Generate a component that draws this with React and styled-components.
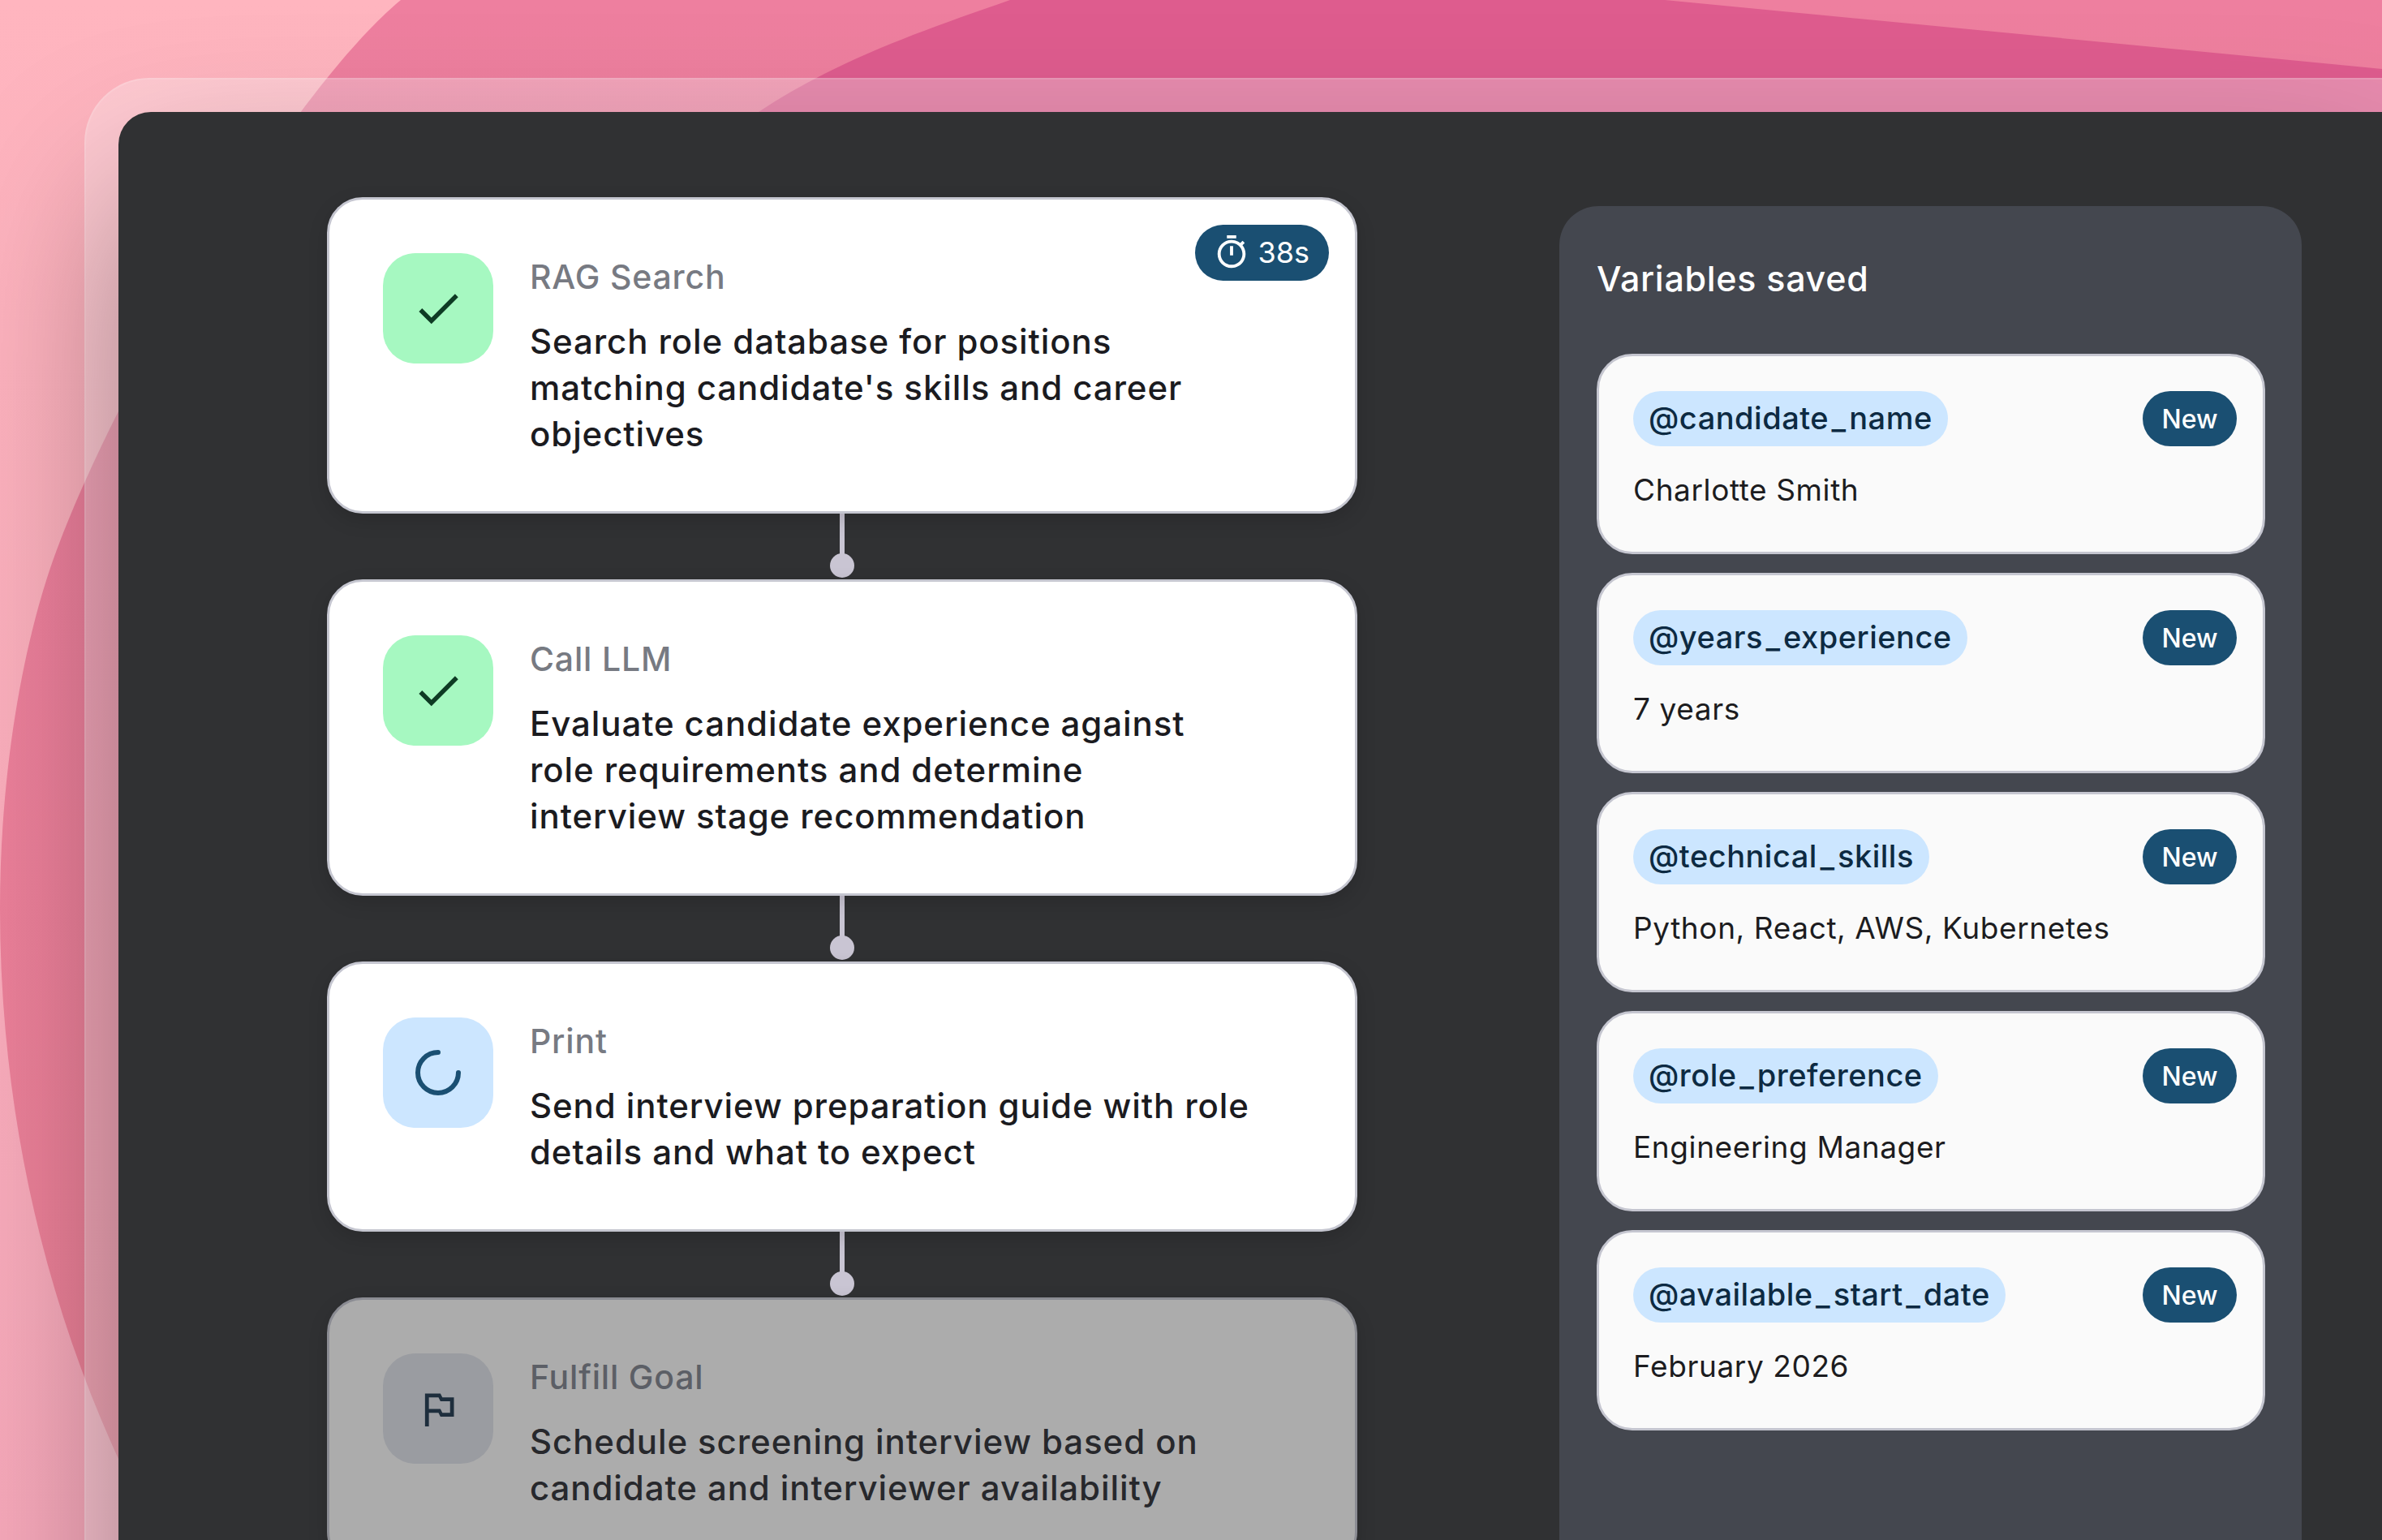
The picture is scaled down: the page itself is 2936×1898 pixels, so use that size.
import styled, { createGlobalStyle } from "styled-components";

const GlobalStyle = createGlobalStyle`
  * { box-sizing: border-box; }
  html, body { margin: 0; padding: 0; }
  body { font-family: "Inter", "Liberation Sans", sans-serif; }
`;

const Page = styled.div`
  position: relative;
  width: 2936px;
  height: 1898px;
  overflow: hidden;
  padding: 96px 0 0 104px;
`;

const Backdrop = styled.svg`
  position: absolute;
  top: 0;
  left: 0;
`;

const Glass = styled.div`
  position: relative;
  height: 1900px;
  padding: 40px 0 0 40px;
  border: solid rgba(255, 255, 255, 0.12);
  border-width: 2px 0 0 2px;
  border-radius: 80px 0 0 0;
  background: rgba(255, 255, 255, 0.29);
`;

const Panel = styled.div`
  display: flex;
  align-items: flex-start;
  height: 1900px;
  padding: 105px 0 0 257px;
  gap: 249px;
  border-radius: 40px 0 0 0;
  background: #303133;
  box-shadow: 0 100px 200px rgba(0, 0, 0, 0.35);
`;

const Flow = styled.div`
  display: flex;
  flex-direction: column;
  flex: none;
  width: 1270px;
`;

const StepCard = styled.div`
  position: relative;
  display: flex;
  gap: 45px;
  padding: 66px 66px 67px;
  border: 3px solid ${(p) => (p.$muted ? "#8b8c93" : "#c5c6d0")};
  border-radius: 44px;
  background: ${(p) => (p.$muted ? "#acacac" : "#fff")};
  box-shadow: 0 8px 24px rgba(0, 0, 0, 0.14);
`;

const tileColors = { done: "#a6f8c1", running: "#cce6ff", idle: "#9a9ca1" };

const Tile = styled.div`
  display: flex;
  flex: none;
  align-items: center;
  justify-content: center;
  width: 136px;
  height: 136px;
  border-radius: 40px;
  background: ${(p) => tileColors[p.$status]};
`;

const StepText = styled.div`
  display: flex;
  flex-direction: column;
  gap: 24px;
  padding-top: 2px;
`;

const StepTitle = styled.div`
  font-size: 41px;
  line-height: 54px;
  font-weight: 500;
  letter-spacing: 0.8px;
  color: ${(p) => (p.$muted ? "#5c5f66" : "#777a82")};
`;

const StepDesc = styled.div`
  font-size: 42px;
  line-height: 57px;
  font-weight: 500;
  letter-spacing: 0.9px;
  white-space: pre-line;
  color: ${(p) => (p.$muted ? "#27282c" : "#1b1b1f")};
`;

const Timer = styled.div`
  position: absolute;
  top: 31px;
  right: 32px;
  display: flex;
  align-items: center;
  gap: 9px;
  height: 69px;
  padding: 0 24px 2px 22px;
  border-radius: 35px;
  background: #1a4f72;
  color: #fff;
  font-size: 36px;
  font-weight: 400;
`;

const Connector = styled.div`
  display: flex;
  flex-direction: column;
  align-items: center;
  height: 81px;
`;

const Line = styled.div`
  flex: 1;
  width: 6px;
  background: #c9c5d3;
`;

const Dot = styled.div`
  width: 30px;
  height: 30px;
  margin: -1px 0 2px;
  border-radius: 50%;
  background: #c9c5d3;
`;

const Sidebar = styled.div`
  flex: none;
  width: 915px;
  height: 1700px;
  margin-top: 11px;
  padding: 61px 45px 0 46px;
  border-radius: 48px;
  background: #44474f;
`;

const SidebarTitle = styled.div`
  margin-bottom: 65px;
  font-size: 43px;
  line-height: 56px;
  font-weight: 500;
  letter-spacing: 0.7px;
  color: #fff;
`;

const VarList = styled.div`
  display: flex;
  flex-direction: column;
  gap: 23px;
`;

const VarCard = styled.div`
  display: flex;
  flex-direction: column;
  height: 247px;
  padding: 43px 32px 0 42px;
  border: 3px solid #c5c6d0;
  border-radius: 44px;
  background: #fafafa;
`;

const VarHead = styled.div`
  display: flex;
  align-items: center;
  justify-content: space-between;
  margin-bottom: 26px;
`;

const VarName = styled.div`
  height: 68px;
  padding: 0 19px;
  border-radius: 34px;
  background: #cce6ff;
  color: #0d2a42;
  font-size: 38px;
  line-height: 66px;
  font-weight: 500;
  letter-spacing: 0.5px;
`;

const Underscore = styled.span`
  margin: 0 3.5px;
`;

const NewBadge = styled.div`
  width: 116px;
  height: 68px;
  border-radius: 34px;
  background: #1a4f72;
  color: #fff;
  font-size: 32px;
  line-height: 70px;
  font-weight: 500;
  text-align: center;
`;

const VarValue = styled.div`
  font-size: 37px;
  line-height: 56px;
  font-weight: 400;
  letter-spacing: 0.6px;
  color: #1c1c20;
`;

const CheckIcon = () => (
  <svg width="66" height="66" viewBox="0 0 24 24" fill="#0e3b24">
    <path d="M9 16.17L4.83 12l-1.42 1.41L9 19 21 7l-1.41-1.41z" />
  </svg>
);

const SpinnerIcon = () => (
  <svg width="64" height="64" viewBox="-32 -32 64 64" fill="none">
    <path
      d="M0 -25 A25 25 0 1 0 25 0"
      stroke="#1a4f72"
      strokeWidth="6"
      strokeLinecap="round"
    />
  </svg>
);

const FlagIcon = () => (
  <svg width="57" height="57" viewBox="0 0 24 24" fill="#1e2e3d">
    <path d="M14 6l-1-2H5v17h2v-7h5l1 2h7V6h-6zm4 8h-4l-1-2H7V6h5l1 2h5v6z" />
  </svg>
);

const TimerIcon = () => (
  <svg width="46" height="46" viewBox="0 0 24 24" fill="#fff">
    <path d="M15 1H9v2h6V1zm-4 13h2V8h-2v6zm8.03-6.61l1.42-1.42c-.43-.51-.9-.99-1.41-1.41l-1.42 1.42C16.07 4.74 14.12 4 12 4c-4.97 0-9 4.03-9 9s4.02 9 9 9 9-4.03 9-9c0-2.12-.74-4.07-1.97-5.61zM12 20c-3.87 0-7-3.13-7-7s3.13-7 7-7 7 3.13 7 7-3.13 7-7 7z" />
  </svg>
);

const icons = {
  done: <CheckIcon />,
  running: <SpinnerIcon />,
  idle: <FlagIcon />,
};

const steps = [
  {
    title: "RAG Search",
    status: "done",
    time: "38s",
    desc: "Search role database for positions\nmatching candidate's skills and career\nobjectives",
  },
  {
    title: "Call LLM",
    status: "done",
    desc: "Evaluate candidate experience against\nrole requirements and determine\ninterview stage recommendation",
  },
  {
    title: "Print",
    status: "running",
    desc: "Send interview preparation guide with role\ndetails and what to expect",
  },
  {
    title: "Fulfill Goal",
    status: "idle",
    desc: "Schedule screening interview based on\ncandidate and interviewer availability",
  },
];

const variables = [
  { name: "@candidate_name", value: "Charlotte Smith" },
  { name: "@years_experience", value: "7 years" },
  { name: "@technical_skills", value: "Python, React, AWS, Kubernetes" },
  { name: "@role_preference", value: "Engineering Manager" },
  { name: "@available_start_date", value: "February 2026" },
];

// the reference font has a much wider underscore
const renderName = (name) =>
  name.split("_").map((part, i) => (
    <span key={part}>
      {i > 0 && <Underscore>_</Underscore>}
      {part}
    </span>
  ));

const App = () => {
  return (
    <Page>
      <GlobalStyle />
      <Backdrop width="2936" height="1898" viewBox="0 0 2936 1898">
        <defs>
          <linearGradient id="base" x1="0" y1="0" x2="0" y2="1">
            <stop offset="0" stopColor="#ffb5bf" />
            <stop offset="1" stopColor="#f6a8ba" />
          </linearGradient>
          <linearGradient id="wave" x1="0" y1="0" x2="0" y2="1">
            <stop offset="0" stopColor="#ee7f9f" />
            <stop offset="1" stopColor="#ea8096" />
          </linearGradient>
        </defs>
        <rect width="2936" height="1898" fill="url(#base)" />
        <path
          d="M494 0 C350 120 130 500 62 700 C25 810 0 960 0 1120 C0 1370 55 1600 146 1798 L400 1898 L2936 1898 L2936 0 Z"
          fill="url(#wave)"
        />
        <path
          d="M1245 0 C1130 40 1030 75 935 138 L900 300 L2936 300 L2936 85 L2052 0 Z"
          fill="#de5c8e"
        />
      </Backdrop>
      <Glass>
        <Panel>
          <Flow>
            {steps.map((step, i) => {
              const muted = step.status === "idle";
              return (
                <div key={step.title}>
                  {i > 0 && (
                    <Connector>
                      <Line />
                      <Dot />
                    </Connector>
                  )}
                  <StepCard $muted={muted}>
                    <Tile $status={step.status}>{icons[step.status]}</Tile>
                    <StepText>
                      <StepTitle $muted={muted}>{step.title}</StepTitle>
                      <StepDesc $muted={muted}>{step.desc}</StepDesc>
                    </StepText>
                    {step.time && (
                      <Timer>
                        <TimerIcon />
                        {step.time}
                      </Timer>
                    )}
                  </StepCard>
                </div>
              );
            })}
          </Flow>
          <Sidebar>
            <SidebarTitle>Variables saved</SidebarTitle>
            <VarList>
              {variables.map((v) => (
                <VarCard key={v.name}>
                  <VarHead>
                    <VarName>{renderName(v.name)}</VarName>
                    <NewBadge>New</NewBadge>
                  </VarHead>
                  <VarValue>{v.value}</VarValue>
                </VarCard>
              ))}
            </VarList>
          </Sidebar>
        </Panel>
      </Glass>
    </Page>
  );
};

export default App;
